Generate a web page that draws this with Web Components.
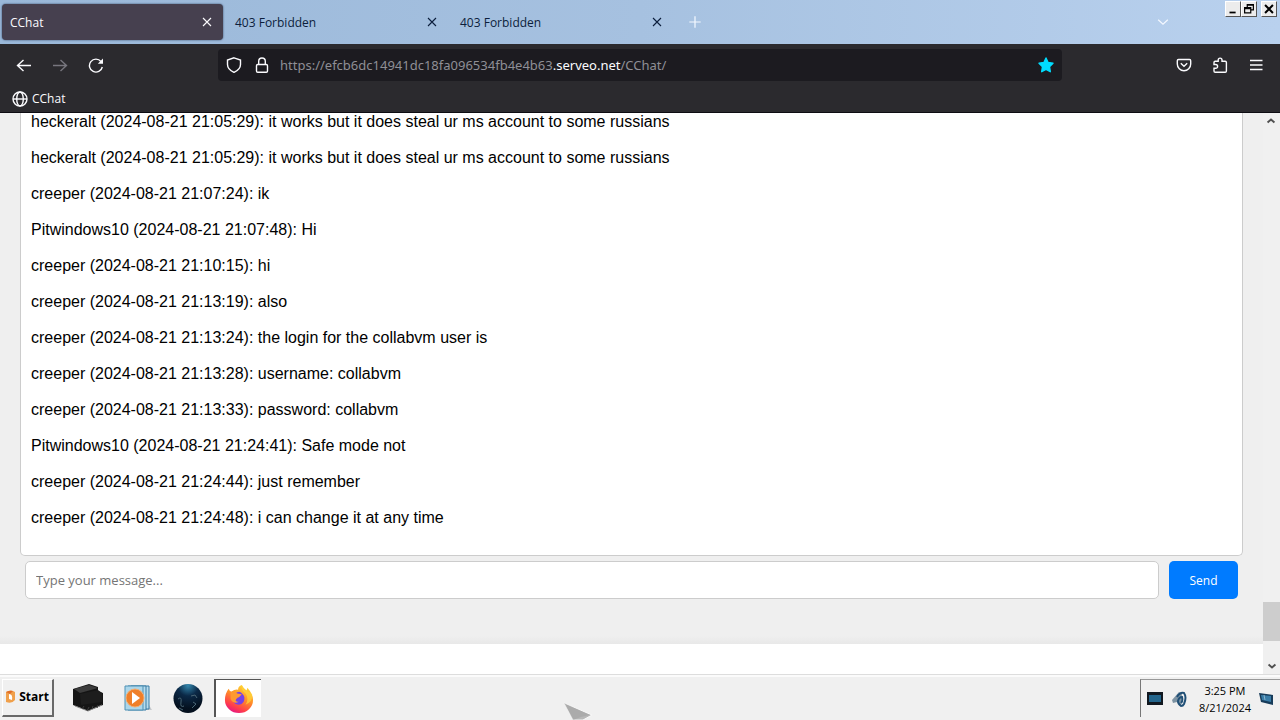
<!DOCTYPE html>
<html lang="en">
<head>
<meta charset="utf-8">
<title>CChat</title>
<style>
  html, body { height: 100%; margin: 0; }
  body {
    font-family: "Noto Sans", "Open Sans", sans-serif;
    font-size: 12px;
    overflow: hidden;
  }
</style>
</head>
<body>
<desktop-screen>
  <tab-strip slot="browser">
    <browser-tab active>CChat</browser-tab>
    <browser-tab>403 Forbidden</browser-tab>
    <browser-tab>403 Forbidden</browser-tab>
  </tab-strip>
  <nav-bar slot="browser"></nav-bar>
  <bookmarks-bar slot="browser"><a href="#chat">CChat</a></bookmarks-bar>
  <page-view slot="page">
    <chat-room>
      <chat-message user="heckeralt" time="2024-08-21 21:05:29">it works but it does steal ur ms account to some russians</chat-message>
      <chat-message user="heckeralt" time="2024-08-21 21:05:29">it works but it does steal ur ms account to some russians</chat-message>
      <chat-message user="creeper" time="2024-08-21 21:07:24">ik</chat-message>
      <chat-message user="Pitwindows10" time="2024-08-21 21:07:48">Hi</chat-message>
      <chat-message user="creeper" time="2024-08-21 21:10:15">hi</chat-message>
      <chat-message user="creeper" time="2024-08-21 21:13:19">also</chat-message>
      <chat-message user="creeper" time="2024-08-21 21:13:24">the login for the collabvm user is</chat-message>
      <chat-message user="creeper" time="2024-08-21 21:13:28">username: collabvm</chat-message>
      <chat-message user="creeper" time="2024-08-21 21:13:33">password: collabvm</chat-message>
      <chat-message user="Pitwindows10" time="2024-08-21 21:24:41">Safe mode not</chat-message>
      <chat-message user="creeper" time="2024-08-21 21:24:44">just remember</chat-message>
      <chat-message user="creeper" time="2024-08-21 21:24:48">i can change it at any time</chat-message>
    </chat-room>
  </page-view>
  <task-bar slot="taskbar"></task-bar>
</desktop-screen>

<script>
// Small helper: attach a shadow root and fill it from a template
function shadow(el, html) {
  const template = document.createElement('template');
  template.innerHTML = html;
  el.attachShadow({ mode: 'open' }).appendChild(template.content.cloneNode(true));
}

const buttonReset = `
  button {
    display: flex;
    align-items: center;
    justify-content: center;
    margin: 0;
    padding: 0;
    border: 0;
    background: none;
    color: inherit;
    font: inherit;
  }
`;

// 16x16 line icons, stroked with the current colour
const icons = {
  back: '<path d="M15 8.500H1.500M7.500 3l-6 5.500 6 5.500"/>',
  forward: '<path d="M1 8.500h13.500M8.500 3l6 5.500-6 5.500"/>',
  reload: '<path d="M14.300 10A6.500 6.500 0 1 1 13 4.500"/><path d="M15 1.500v5.200H9.800z" fill="currentColor" stroke="none"/>',
  shield: '<path d="M8 .8 14.500 3v4.500c0 3.500-2.500 6-6.500 7.900C4 13.500 1.500 11 1.500 7.500V3z"/>',
  lock: '<rect x="2.500" y="7.500" width="11" height="7.700" rx="1.200"/><path d="M4.700 7.500V4.300a3.300 3.300 0 0 1 6.600 0v3.200"/>',
  star: '<path fill="currentColor" stroke-linejoin="round" d="m8 1 2.100 4.500 4.900.7-3.500 3.500.8 5L8 12.300l-4.300 2.400.8-5L1 6.200l4.900-.7z"/>',
  pocket: '<path d="M2.500 2.500h11c.7 0 1.200.5 1.200 1.200V7a6.700 6.700 0 0 1-13.400 0V3.700c0-.7.500-1.200 1.200-1.200z"/><path d="m4.800 6.300 3.200 3 3.200-3"/>',
  extension: '<path d="M2 7.500V5.500c0-.7.500-1.200 1.200-1.200h3V3a1.900 1.900 0 0 1 3.800 0v1.300h3.200c.7 0 1.200.5 1.200 1.200v8.500c0 .7-.5 1.200-1.200 1.200h-10c-.7 0-1.200-.5-1.200-1.200v-2.700h1.700a1.900 1.900 0 0 0 0-3.800z"/>',
  menu: '<path d="M2 3.500h12.500M2 8h12.500M2 12.500h12.500"/>',
  globe: '<circle cx="8" cy="8" r="7"/><ellipse cx="8" cy="8" rx="3.300" ry="7"/><path d="M1 8h14"/>',
  close: '<path d="m4 4 8 8M12 4l-8 8"/>',
  plus: '<path d="M8 1.500v13M1.500 8h13"/>',
  chevron: '<path d="m2.500 5.500 5.500 5 5.500-5"/>',
  minimize: '<path d="M4 12h7" stroke-width="2"/>',
  restore: '<path d="M6 6V3h7v6h-3M6 3.500h7M3 6.500h7v6H3zM3 7.500h7"/>',
  winclose: '<path d="m3.500 3.500 9 9M12.500 3.500l-9 9" stroke-width="2.300"/>'
};

class UiIcon extends HTMLElement {
  connectedCallback() {
    if (this.shadowRoot) return;
    shadow(this, `
      <style>
        :host { display: block; flex: none; width: var(--icon-size, 16px); height: var(--icon-size, 16px); }
        svg { display: block; width: 100%; height: 100%; }
      </style>
      <svg viewBox="0 0 16 16" fill="none" stroke="currentColor" stroke-width="var(--icon-stroke, 1.400)" style="stroke-width: var(--icon-stroke, 1.4)" aria-hidden="true">${icons[this.getAttribute('name')]}</svg>
    `);
  }
}

class DesktopScreen extends HTMLElement {
  constructor() {
    super();
    shadow(this, `
      <style>
        :host { display: flex; flex-direction: column; height: 100vh; position: relative; overflow: hidden; }
        header { flex: none; background: #2b2a2e; border-bottom: 1px solid #0d0c12; }
        main { flex: 1; min-height: 0; display: flex; }
        footer { flex: none; }
        /* mouse pointer floats over everything */
        .pointer { position: absolute; left: 44%; bottom: 0; width: 30px; height: 18px; pointer-events: none; }
      </style>
      <header><slot name="browser"></slot></header>
      <main><slot name="page"></slot></main>
      <footer><slot name="taskbar"></slot></footer>
      <svg class="pointer" viewBox="0 0 30 18" aria-hidden="true">
        <path d="M1 1 29 13l-9 5H10z" fill="#b8b8b8" stroke="#f8f8f8"/>
        <path d="m1 1 26 12-9 2-8 3z" fill="#999" opacity=".4"/>
      </svg>
    `);
  }
}

class TabStrip extends HTMLElement {
  constructor() {
    super();
    shadow(this, `
      <style>
        ${buttonReset}
        :host {
          display: flex;
          align-items: center;
          height: 44px;
          background: linear-gradient(90deg, #9ab8d9, #a6c1e0 50%, #b9d1ee);
          color: #f4f8ff;
        }
        .new { width: 40px; height: 36px; }
        .new ui-icon { --icon-size: 14px; }
        .list { width: 36px; height: 36px; margin-left: auto; margin-right: 44px; }
        .list ui-icon { --icon-size: 14px; }
        .window { display: flex; align-self: flex-start; padding: 1px 3px 0 0; color: #000; }
        .window button {
          width: 16px;
          height: 16px;
          box-sizing: border-box;
          background: #ececec;
          border: 1px solid;
          border-color: #fff #555 #555 #fff;
        }
        .window button:last-child { margin-left: 4px; }
        .window ui-icon { --icon-size: 14px; }
      </style>
      <slot></slot>
      <button class="new" aria-label="New tab"><ui-icon name="plus"></ui-icon></button>
      <button class="list" aria-label="List all tabs"><ui-icon name="chevron"></ui-icon></button>
      <div class="window">
        <button aria-label="Minimize"><ui-icon name="minimize"></ui-icon></button>
        <button aria-label="Restore"><ui-icon name="restore"></ui-icon></button>
        <button aria-label="Close"><ui-icon name="winclose"></ui-icon></button>
      </div>
    `);
  }
}

class BrowserTab extends HTMLElement {
  constructor() {
    super();
    shadow(this, `
      <style>
        ${buttonReset}
        :host {
          display: flex;
          align-items: center;
          justify-content: space-between;
          box-sizing: border-box;
          width: 221px;
          height: 36px;
          margin: 0 2px;
          padding: 0 8px;
          border-radius: 4px;
          color: #0c1e3c;
          font-family: "Open Sans", sans-serif;
        }
        :host([active]) { background: #46404f; color: #fbfbfe; box-shadow: 0 0 2px #2d3e5e; }
        ui-icon { --icon-size: 16px; --icon-stroke: 1.1; }
      </style>
      <span><slot></slot></span>
      <button aria-label="Close tab"><ui-icon name="close"></ui-icon></button>
    `);
  }
}

class NavBar extends HTMLElement {
  constructor() {
    super();
    shadow(this, `
      <style>
        ${buttonReset}
        :host {
          display: flex;
          align-items: center;
          justify-content: space-between;
          height: 41px;
          padding: 0 6px;
          color: #fbfbfe;
        }
        .group { display: flex; }
        .group button { width: 36px; height: 36px; }
        button:disabled { color: #77767e; }
        /* grows to fill what the two button groups and their margins leave */
        .url {
          display: flex;
          align-items: center;
          flex: 1;
          margin: 0 104px;
          height: 32px;
          padding: 0 2px;
          background: #1c1b20;
          border-radius: 4px;
        }
        .url button { width: 28px; height: 28px; }
        .address { flex: 1; margin-left: 4px; font-family: "Noto Sans", sans-serif; font-size: 13px; color: #8f8f96; text-decoration: none; }
        .address b { font-weight: 400; color: #fbfbfe; }
        .star { color: #00ddff; }
      </style>
      <div class="group">
        <button aria-label="Back"><ui-icon name="back"></ui-icon></button>
        <button aria-label="Forward" disabled><ui-icon name="forward"></ui-icon></button>
        <button aria-label="Reload"><ui-icon name="reload"></ui-icon></button>
      </div>
      <div class="url">
        <button aria-label="Tracking protection"><ui-icon name="shield"></ui-icon></button>
        <button aria-label="Site information"><ui-icon name="lock"></ui-icon></button>
        <a class="address" href="#chat">https://efcb6dc14941dc18fa096534fb4e4b63<b>.serveo.net</b>/CChat/</a>
        <button class="star" aria-label="Edit bookmark"><ui-icon name="star"></ui-icon></button>
      </div>
      <div class="group">
        <button aria-label="Save to Pocket"><ui-icon name="pocket"></ui-icon></button>
        <button aria-label="Extensions"><ui-icon name="extension"></ui-icon></button>
        <button aria-label="Menu"><ui-icon name="menu"></ui-icon></button>
      </div>
    `);
  }
}

class BookmarksBar extends HTMLElement {
  constructor() {
    super();
    shadow(this, `
      <style>
        :host { display: flex; align-items: center; gap: 4px; height: 27px; padding: 0 12px; color: #fbfbfe; font-family: "Open Sans", sans-serif; }
        ::slotted(a) { color: inherit; text-decoration: none; }
      </style>
      <ui-icon name="globe"></ui-icon>
      <slot></slot>
    `);
  }
}

class PageView extends HTMLElement {
  constructor() {
    super();
    shadow(this, `
      <style>
        ${buttonReset}
        :host { display: flex; flex: 1; min-width: 0; background: #fff; }
        .page { flex: 1; min-width: 0; display: flex; flex-direction: column; padding-bottom: 30px; }
        .scroll {
          flex: none;
          display: flex;
          flex-direction: column;
          width: 17px;
          background: #f0f0f0;
          color: #505050;
        }
        .scroll button { height: 17px; }
        .scroll ui-icon { --icon-size: 10px; --icon-stroke: 3; }
        .up { transform: rotate(180deg); }
        .track { flex: 1; display: flex; flex-direction: column; justify-content: flex-end; padding-bottom: 16px; }
        .thumb { height: 39px; background: #cdcdcd; }
      </style>
      <div class="page"><slot></slot></div>
      <div class="scroll">
        <button class="up" aria-label="Scroll up"><ui-icon name="chevron"></ui-icon></button>
        <div class="track"><div class="thumb"></div></div>
        <button aria-label="Scroll down"><ui-icon name="chevron"></ui-icon></button>
      </div>
    `);
  }
}

class ChatRoom extends HTMLElement {
  constructor() {
    super();
    shadow(this, `
      <style>
        :host {
          display: flex;
          flex-direction: column;
          flex: 1;
          min-height: 0;
          padding: 0 20px 40px;
          background: linear-gradient(#efefef, #efefef calc(100% - 8px), #e8e8e8);
        }
        /* newest message stays at the bottom, older ones run off the top */
        .log {
          flex: 1;
          min-height: 0;
          display: flex;
          flex-direction: column;
          justify-content: flex-end;
          gap: 16px;
          overflow: hidden;
          padding: 0 10px 27px;
          background: #fff;
          border: 1px solid #ccc;
          border-top: 0;
          border-radius: 0 0 5px 5px;
        }
        form { display: flex; gap: 10px; padding: 5px; }
        input, button {
          box-sizing: border-box;
          height: 38px;
          margin: 0;
          border-radius: 5px;
          font-family: "Open Sans", sans-serif;
          font-size: 13px;
        }
        input { flex: 1; min-width: 0; padding: 0 10px; border: 1px solid #ccc; background: #fff; }
        input::placeholder { color: #757575; opacity: 1; }
        button { min-width: 69px; padding: 0 16px; border: 0; background: #007bff; color: #fff; font-size: 12px; }
      </style>
      <div class="log"><slot></slot></div>
      <form>
        <input type="text" placeholder="Type your message..." aria-label="Type your message...">
        <button type="button">Send</button>
      </form>
    `);
  }
}

class ChatMessage extends HTMLElement {
  connectedCallback() {
    if (this.shadowRoot) return;
    shadow(this, `
      <style>
        :host { display: block; flex: none; font-family: "Liberation Sans", Arial, sans-serif; font-size: 16px; line-height: 20px; color: #000; }
        p { margin: 0; }
      </style>
      <p>${this.getAttribute('user')} (${this.getAttribute('time')}): <slot></slot></p>
    `);
  }
}

class TaskBar extends HTMLElement {
  constructor() {
    super();
    shadow(this, `
      <style>
        ${buttonReset}
        :host {
          display: flex;
          align-items: stretch;
          box-sizing: border-box;
          height: 46px;
          padding: 4px 0 3px 2px;
          background: #f0f0f0;
          border-top: 1px solid #ddd;
          box-shadow: inset 0 2px #fbfbfb;
          color: #000;
          font-family: "Open Sans", sans-serif;
        }
        svg { display: block; }
        .start {
          gap: 4px;
          width: 52px;
          margin-right: 10px;
          padding-bottom: 2px;
          background: #f0f0f0;
          border: solid;
          border-width: 1px 2px 2px 1px;
          border-color: #fff #696969 #696969 #fff;
          font-weight: 700;
        }
        .app { width: 48px; margin-right: 2px; }
        .app.open { width: 47px; background: #fff; border-top: 1px solid #555; border-left: 2px solid #555; }
        .tray {
          display: flex;
          align-items: center;
          gap: 8px;
          margin-left: auto;
          padding: 0 6px;
          border-top: 1px solid #999;
          border-left: 1px solid #777;
        }
        .clock { margin-left: 4px; font-size: 11px; line-height: 17px; text-align: center; }
      </style>
      <button class="start">
        <svg width="9" height="13" viewBox="0 0 9 13" aria-hidden="true">
          <path d="M0 2q5-3 9 0v8q-3 4-9 2z" fill="#f0a04b"/>
          <path d="M3 4q4 0 3 6l-3-1z" fill="#fff"/><path d="M0 2q4-2 7-1L4 4z" fill="#e06f2a"/>
        </svg>
        Start
      </button>
      <button class="app" aria-label="Computer">
        <svg width="32" height="30" viewBox="0 0 32 30" aria-hidden="true">
          <path d="m1 6 16-5 9 3v4l5 2v12l-15 6L1 22z" fill="#151515"/>
          <path d="m2 6 15-4 9 3-18 5z" fill="#3c3c3c"/>
          <path d="m8 11 18-4 4 3v9L9 22z" fill="#1d1d1d"/>
          <path d="m3 23 13 5 14-6" fill="none" stroke="#8a8a8a"/>
          <path d="m10 26 2-3m3 5 2-4m3 2 1-3m4 2 1-3" stroke="#3d3d3d"/>
        </svg>
      </button>
      <button class="app" aria-label="Media player">
        <svg width="30" height="28" viewBox="0 0 30 28" aria-hidden="true">
          <path d="M20 26h9l-3-5z" fill="#c6c9cc"/>
          <path d="M8 2h18v23H8z" fill="#b7dced" stroke="#397da5"/><path d="M5 2h18v24H5z" fill="#b7dced" stroke="#397da5"/>
          <path d="M2 2h18v24H2z" fill="#abd6ea" stroke="#4e91b5"/>
          <circle cx="12" cy="14" r="9" fill="#ef7f29" stroke="#f4ad71"/>
          <path d="m9 8 8 6-8 6z" fill="#fff"/>
        </svg>
      </button>
      <button class="app" aria-label="Globe">
        <svg width="30" height="31" viewBox="0 0 30 31" aria-hidden="true">
          <defs><radialGradient id="orb" cx=".5" cy=".05" r=".8"><stop stop-color="#3387ad"/><stop offset=".45" stop-color="#0b2947"/><stop offset="1" stop-color="#04101e"/></radialGradient></defs>
          <circle cx="15" cy="15.500" r="14.500" fill="url(#orb)"/>
          <path d="M5 16q4-3 3 3t3 4M18 13l4-1 2 3m-4 4 3 2-4 4m-13 0 4 2" fill="none" stroke="#4a6675"/>
        </svg>
      </button>
      <button class="app open" aria-label="Firefox">
        <svg width="30" height="30" viewBox="0 0 32 32" aria-hidden="true">
          <defs>
            <linearGradient id="fox" x1=".8" y1="0" x2=".3" y2="1"><stop stop-color="#ffe335"/><stop offset=".45" stop-color="#ff8f29"/><stop offset=".8" stop-color="#ff3c4c"/><stop offset="1" stop-color="#e31587"/></linearGradient>
          </defs>
          <path d="M5 5q1 3 3 3 4-3 7-2Q15 2 19 1q2 4 5 6l1-3q6 7 6 13a15 14 0 0 1-30 0Q1 10 5 5z" fill="url(#fox)"/>
          <path d="M12 10q5-4 8 1 3 3 1 8-3 5-9 2-3-2-2-5l5-1q-5-1-3-5z" fill="#7542e5"/>
          <path d="M7 9q5-2 7 1l5 1-3 3q-2 0-3 2-2 3 3 3-6 3-9-3z" fill="#ff9a30"/>
          <path d="M19 1q-1 6 4 9 4 6 0 12 8-3 7-11-3-2-6-4-4-2-5-6z" fill="#ffd43a" opacity=".7"/>
        </svg>
      </button>
      <div class="tray">
        <svg width="16" height="13" viewBox="0 0 16 13" aria-hidden="true"><path d="M0 0h16v13H0z" fill="#111820"/><path d="M2 3h12v7H2z" fill="#23658c"/></svg>
        <svg width="16" height="16" viewBox="0 0 16 16" aria-hidden="true"><path d="M1 9 8 1l3 1-1 13-4-4-4 1z" fill="#7d93a3"/><path d="M6 6q3-5 7-4 3 4 0 11-1 2-3 2-3-2-3-5 1-4 4-4 1 4-1 6" fill="none" stroke="#204f76" stroke-width="2"/></svg>
        <div class="clock">3:25 PM<br>8/21/2024</div>
        <svg width="15" height="15" viewBox="0 0 15 15" aria-hidden="true"><path d="m0 2 14 2v10L2 11z" fill="#173c5a"/><path d="m2 4 10 1v6l-9-2z" fill="#397da8"/><path d="m5 4 1 5" stroke="#8ab6cf"/></svg>
      </div>
    `);
  }
}

customElements.define('ui-icon', UiIcon);
customElements.define('desktop-screen', DesktopScreen);
customElements.define('tab-strip', TabStrip);
customElements.define('browser-tab', BrowserTab);
customElements.define('nav-bar', NavBar);
customElements.define('bookmarks-bar', BookmarksBar);
customElements.define('page-view', PageView);
customElements.define('chat-room', ChatRoom);
customElements.define('chat-message', ChatMessage);
customElements.define('task-bar', TaskBar);
</script>
</body>
</html>
